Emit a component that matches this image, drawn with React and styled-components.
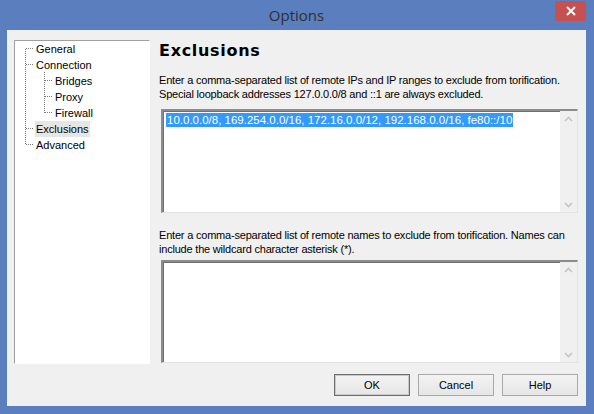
import React from "react";
import styled, { createGlobalStyle } from "styled-components";

const Global = createGlobalStyle`
  html, body { margin: 0; padding: 0; width: 594px; height: 414px; overflow: hidden; background: #5b7ebf; }
  * { box-sizing: border-box; }
`;

const Win = styled.div`
  width: 594px;
  height: 414px;
  background: #5b7ebf;
  display: flex;
  flex-direction: column;
  padding: 0 8px 8px 7px;
  font-family: "Liberation Sans", Arial, sans-serif;
  font-size: 11px;
  color: #000;
`;

const TitleBar = styled.div`
  position: relative;
  height: 30px;
  display: flex;
  align-items: center;
  justify-content: center;
  font-family: "Open Sans", "Noto Sans", sans-serif;
  font-size: 15px;
  color: #2e2e2e;
`;

const CloseBtn = styled.div`
  position: absolute;
  right: 0px;
  top: 1px;
  width: 31px;
  height: 20px;
  background: #c75050;
  display: flex;
  align-items: center;
  justify-content: center;
`;

const Client = styled.div`
  flex: 1;
  background: #f0f0f0;
  display: flex;
  flex-direction: column;
  padding: 10px 8px 10px 7px;
`;

const Main = styled.div`
  height: 324px;
  display: flex;
  gap: 9px;
`;

const Tree = styled.div`
  position: relative;
  flex: 0 0 136px;
  background: #fff;
  border-top: 1px solid #a0a0a0;
  border-left: 1px solid #a0a0a0;
  border-right: 1px solid #fff;
  border-bottom: 1px solid #fff;
`;

const Lines = styled.svg`
  position: absolute;
  left: 0;
  top: 0;
  pointer-events: none;
`;

const Row = styled.div`
  height: 16px;
  display: flex;
  align-items: center;
  padding-left: ${(p) => (p.$level === 1 ? 39 : 20)}px;
`;

const Label = styled.span`
  padding: 0 1px;
  line-height: 16px;
  background: ${(p) => (p.$selected ? "#e6e6e6" : "transparent")};
`;

const Panel = styled.div`
  flex: 1;
  min-width: 0;
  display: flex;
  flex-direction: column;
`;

const Heading = styled.div`
  font-family: "DejaVu Sans", sans-serif;
  font-weight: bold;
  font-size: 16px;
  letter-spacing: 0.7px;
  height: 17px;
  line-height: 17px;
  margin-top: 2px;
  color: #000;
`;

const Desc = styled.div`
  margin-top: ${(p) => p.$mt}px;
  line-height: 14px;
  height: 28px;
  white-space: nowrap;
  letter-spacing: -0.2px;
`;

const Box = styled.div`
  margin-left: 2px;
  margin-top: ${(p) => p.$mt}px;
  height: ${(p) => p.$h}px;
  background: #fff;
  border-top: 2px solid #8c8c8c;
  border-left: 2px solid #8c8c8c;
  border-right: 1px solid #e3e3e3;
  border-bottom: 1px solid #e3e3e3;
  box-shadow: inset 1px 1px 0 #707070;
  display: flex;
`;

const BoxText = styled.div`
  flex: 1;
  padding: 2px 3px;
  line-height: 15px;
  font-size: 11.5px;
  white-space: nowrap;
`;

const Sel = styled.span`
  background: #3399ff;
  color: #fff;
  padding: 1px 1px;
`;

const Scroll = styled.div`
  width: 17px;
  background: #f0f0f0;
  display: flex;
  flex-direction: column;
  justify-content: space-between;
  align-items: center;
  padding: 5px 0 4px;
`;

const Buttons = styled.div`
  margin-top: 10px;
  display: flex;
  justify-content: flex-end;
  gap: 8px;
`;

const Button = styled.div`
  width: 76px;
  height: 22px;
  display: flex;
  align-items: center;
  justify-content: center;
  background: linear-gradient(#f3f3f3, #e6e6e6);
  border: 1px solid ${(p) => (p.$def ? "#6d6d6d" : "#a9a9a9")};
  box-shadow: ${(p) => (p.$def ? "inset 0 0 0 1px #c9c9c9" : "none")};
  color: #000;
`;

const Chevron = ({ up }) => (
  <svg width="9" height="6" viewBox="0 0 9 6">
    <path
      d={up ? "M1 5 L4.5 1.5 L8 5" : "M1 1 L4.5 4.5 L8 1"}
      fill="none"
      stroke="#c4c4c4"
      strokeWidth="1.6"
    />
  </svg>
);

const rows = [
  { t: "General", l: 0 },
  { t: "Connection", l: 0 },
  { t: "Bridges", l: 1 },
  { t: "Proxy", l: 1 },
  { t: "Firewall", l: 1 },
  { t: "Exclusions", l: 0, s: true },
  { t: "Advanced", l: 0 },
];

export default function App() {
  const dot = { stroke: "#7a7a7a", strokeWidth: 1, strokeDasharray: "1 1" };
  return (
    <>
      <Global />
      <Win>
        <TitleBar>
          Options
          <CloseBtn>
            <svg width="10" height="10" viewBox="0 0 10 10">
              <path d="M1 1 L9 9 M9 1 L1 9" stroke="#fff" strokeWidth="2" />
            </svg>
          </CloseBtn>
        </TitleBar>
        <Client>
          <Main>
            <Tree>
              <Lines width="134" height="160">
                <line x1="10.5" y1="8" x2="10.5" y2="104" {...dot} />
                {[0, 1, 5, 6].map((i) => (
                  <line key={i} x1="11" y1={7.5 + 16 * i} x2="19" y2={7.5 + 16 * i} {...dot} />
                ))}
                <line x1="29.5" y1="31" x2="29.5" y2="72" {...dot} />
                {[2, 3, 4].map((i) => (
                  <line key={i} x1="30" y1={7.5 + 16 * i} x2="38" y2={7.5 + 16 * i} {...dot} />
                ))}
              </Lines>
              {rows.map((r) => (
                <Row key={r.t} $level={r.l}>
                  <Label $selected={r.s}>{r.t}</Label>
                </Row>
              ))}
            </Tree>
            <Panel>
              <Heading>Exclusions</Heading>
              <Desc $mt={14}>
                Enter a comma-separated list of remote IPs and IP ranges to exclude from torification.
                <br />
                Special loopback addresses 127.0.0.0/8 and ::1 are always excluded.
              </Desc>
              <Box $mt={8} $h={104}>
                <BoxText>
                  <Sel>10.0.0.0/8, 169.254.0.0/16, 172.16.0.0/12, 192.168.0.0/16, fe80::/10</Sel>
                </BoxText>
                <Scroll>
                  <Chevron up />
                  <Chevron />
                </Scroll>
              </Box>
              <Desc $mt={15}>
                Enter a comma-separated list of remote names to exclude from torification. Names can
                <br />
                include the wildcard character asterisk (*).
              </Desc>
              <Box $mt={4} $h={103}>
                <BoxText />
                <Scroll>
                  <Chevron up />
                  <Chevron />
                </Scroll>
              </Box>
            </Panel>
          </Main>
          <Buttons>
            <Button $def>OK</Button>
            <Button>Cancel</Button>
            <Button>Help</Button>
          </Buttons>
        </Client>
      </Win>
    </>
  );
}
